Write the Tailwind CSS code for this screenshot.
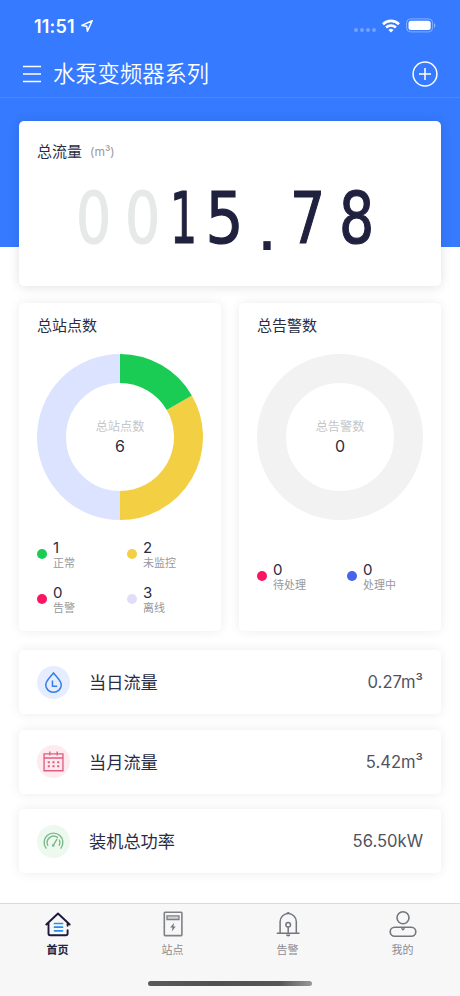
<!DOCTYPE html>
<html lang="zh-CN">
<head>
<meta charset="utf-8">
<meta name="viewport" content="width=device-width, initial-scale=1">
<title>水泵变频器系列</title>
<script src="https://cdn.jsdelivr.net/npm/@tailwindcss/browser@4"></script>
</head>
<body class="bg-white font-['Inter','Noto_Sans_CJK_SC',sans-serif] text-[#2a2c44]">
<div class="flex h-[996px] w-[460px] flex-col overflow-hidden">

  <header class="h-[247px] shrink-0 bg-[#357aff] text-white">
    <!-- status bar -->
    <div class="flex h-[50px] items-center pt-[2px] pr-[24px] pl-[34px]">
      <span class="w-[43px] text-[18px] font-semibold tracking-[0.2px] whitespace-nowrap">11:51</span>
      <svg class="ml-[3px] h-[14px] w-[14px]" viewBox="0 0 14 14" fill="none" stroke="white" stroke-width="1.5" stroke-linejoin="round"><path d="M12.2 1.8 1.8 6.4l4.9.8.7 5z"/></svg>
      <div class="mt-[8px] ml-auto flex gap-[2px]">
        <i class="h-[4px] w-[4px] rounded-full bg-white/30"></i><i class="h-[4px] w-[4px] rounded-full bg-white/30"></i><i class="h-[4px] w-[4px] rounded-full bg-white/30"></i><i class="h-[4px] w-[4px] rounded-full bg-white/30"></i>
      </div>
      <svg class="ml-[6px] h-[14px] w-[18px]" viewBox="0 0 18 14" fill="none" stroke="white" stroke-width="2.6"><path d="M1 5.2a11.4 11.4 0 0 1 16 0"/><path d="M4.1 8.5a7 7 0 0 1 9.8 0"/><path d="M9 13.6 6.5 11a3.6 3.6 0 0 1 5 0z" fill="white" stroke="none"/></svg>
      <svg class="-mt-[2px] ml-[6px] h-[15px] w-[30px]" viewBox="0 0 30 15" fill="none"><rect x=".6" y=".9" width="26" height="13" rx="4" stroke="white" stroke-opacity=".4"/><rect x="2.5" y="2.8" width="22.2" height="9.2" rx="2.5" fill="white"/><path d="M28 5.2c1.8.7 1.8 3.9 0 4.6z" fill="white" fill-opacity=".45"/></svg>
    </div>
    <!-- title bar -->
    <div class="flex h-[48px] items-center border-b border-white/10 pr-[22px] pl-[23px]">
      <svg class="h-[18px] w-[18px]" viewBox="0 0 18 18" stroke="white" stroke-width="1.5"><path d="M0 1.500h18M0 9h18M0 16.500h18"/></svg>
      <h1 class="ml-[12px] text-[22.3px] leading-[46px] font-[350]">水泵变频器系列</h1>
      <svg class="ml-auto h-[26px] w-[26px]" viewBox="0 0 26 26" fill="none" stroke="white" stroke-width="1.5"><circle cx="13" cy="13" r="11.9"/><path d="M13 7v12M7 13h12"/></svg>
    </div>
  </header>

  <main class="relative -mt-[126px] px-[19px]">
    <section class="h-[165px] rounded-[5px] bg-white px-[18px] pt-[20px] shadow-[0_1px_12px_rgba(0,0,0,0.12)]">
      <div class="flex h-[22px] items-center text-[15px]">总流量<span class="ml-[8px] text-[12px] text-[#9899a1]">(m³)</span></div>
      <div class="mt-[29px] ml-[33px] flex h-[53px] w-[314px] items-center text-center font-['DejaVu_Sans',sans-serif] text-[71px] leading-[53px] text-[#20213f] [-webkit-text-stroke:1.2px]">
        <span class="flex w-[48px] justify-center text-[#e7e9e9]"><b class="scale-x-[0.78] font-normal">0</b></span>
        <span class="flex w-[49px] justify-center text-[#e7e9e9]"><b class="scale-x-[0.78] font-normal">0</b></span>
        <span class="flex w-[34px] justify-center"><b class="scale-x-[0.6] font-normal">1</b></span>
        <span class="flex w-[48px] justify-center"><b class="scale-x-[0.84] font-normal">5</b></span>
        <span class="flex w-[36px] justify-center"><b class="translate-y-[7px] font-normal [-webkit-text-stroke:0]">.</b></span>
        <span class="flex w-[45px] justify-center"><b class="scale-x-[0.78] font-normal">7</b></span>
        <span class="flex w-[54px] justify-center"><b class="scale-x-[0.78] font-normal">8</b></span>
      </div>
    </section>

    <div class="mt-[17px] grid grid-cols-2 gap-[18px]">
      <section class="h-[328px] rounded-[5px] bg-white px-[18px] pt-[12px] shadow-[0_0_12px_rgba(0,0,0,0.08)]">
        <h2 class="h-[22px] text-[15px] leading-[22px]">总站点数</h2>
        <div class="mt-[17px] grid h-[166px] w-[166px] place-items-center">
          <svg class="col-start-1 row-start-1 h-[166px] w-[166px]" viewBox="0 0 166 166" fill="none" stroke-width="29"><path d="M83 151.5a68.5 68.5 0 0 1 0-137" stroke="#dce3ff"/><path d="M142.32 48.75A68.5 68.5 0 0 1 83 151.5" stroke="#f3cf44"/><path d="M83 14.5a68.5 68.5 0 0 1 59.32 34.25" stroke="#1acc54"/></svg>
          <div class="col-start-1 row-start-1 text-center"><div class="text-[12.2px] leading-[18px] text-[#c6c6c8]">总站点数</div><div class="text-[16px] leading-[21px]">6</div></div>
        </div>
        <div class="mt-[18px] grid grid-cols-[90px_80px] gap-y-[14px]">
          <div class="flex items-center"><i class="mr-[6px] h-[10px] w-[10px] rounded-full bg-[#1acc54]"></i><div class="pt-[1px]"><div class="h-[16px] text-[15px] leading-[18px]">1</div><div class="h-[14px] text-[11px] leading-[16px] text-[#97989c]">正常</div></div></div>
          <div class="flex items-center"><i class="mr-[6px] h-[10px] w-[10px] rounded-full bg-[#f3cf44]"></i><div class="pt-[1px]"><div class="h-[16px] text-[15px] leading-[18px]">2</div><div class="h-[14px] text-[11px] leading-[16px] text-[#97989c]">未监控</div></div></div>
          <div class="flex items-center"><i class="mr-[6px] h-[10px] w-[10px] rounded-full bg-[#fa1464]"></i><div class="pt-[1px]"><div class="h-[16px] text-[15px] leading-[18px]">0</div><div class="h-[14px] text-[11px] leading-[16px] text-[#97989c]">告警</div></div></div>
          <div class="flex items-center"><i class="mr-[6px] h-[10px] w-[10px] rounded-full bg-[#e0dff7]"></i><div class="pt-[1px]"><div class="h-[16px] text-[15px] leading-[18px]">3</div><div class="h-[14px] text-[11px] leading-[16px] text-[#97989c]">离线</div></div></div>
        </div>
      </section>

      <section class="h-[328px] rounded-[5px] bg-white px-[18px] pt-[12px] shadow-[0_0_12px_rgba(0,0,0,0.08)]">
        <h2 class="h-[22px] text-[15px] leading-[22px]">总告警数</h2>
        <div class="mt-[17px] grid h-[166px] w-[166px] place-items-center">
          <svg class="col-start-1 row-start-1 h-[166px] w-[166px]" viewBox="0 0 166 166" fill="none"><circle cx="83" cy="83" r="68.5" stroke="#f2f2f2" stroke-width="29"/></svg>
          <div class="col-start-1 row-start-1 text-center"><div class="text-[12.2px] leading-[18px] text-[#c6c6c8]">总告警数</div><div class="text-[16px] leading-[21px]">0</div></div>
        </div>
        <div class="mt-[40px] grid grid-cols-[90px_80px]">
          <div class="flex items-center"><i class="mr-[6px] h-[10px] w-[10px] rounded-full bg-[#fa1464]"></i><div class="pt-[1px]"><div class="h-[16px] text-[15px] leading-[18px]">0</div><div class="h-[14px] text-[11px] leading-[16px] text-[#97989c]">待处理</div></div></div>
          <div class="flex items-center"><i class="mr-[6px] h-[10px] w-[10px] rounded-full bg-[#4563ed]"></i><div class="pt-[1px]"><div class="h-[16px] text-[15px] leading-[18px]">0</div><div class="h-[14px] text-[11px] leading-[16px] text-[#97989c]">处理中</div></div></div>
        </div>
      </section>
    </div>

    <div class="mt-[19px] flex flex-col gap-[15.3px]">
      <section class="flex h-[64.3px] items-center rounded-[5px] bg-white px-[18px] shadow-[0_0_12px_rgba(0,0,0,0.08)]">
        <span class="grid h-[33px] w-[33px] place-items-center rounded-full bg-[#e5edff]"><svg class="h-[21px] w-[21px]" viewBox="0 0 20 20" fill="none" stroke="#337ce8" stroke-width="1.4" stroke-linejoin="round"><path d="M10 .8C8 4 2.6 8.200 2.600 12.400a7.400 6.900 0 0 0 14.800 0C17.400 8.200 12 4 10 .8Z"/><path d="M9 8v5.500h4.500"/></svg></span>
        <span class="ml-[19px] pt-[2px] text-[17.2px]">当日流量</span>
        <span class="ml-auto pt-[1px] text-[16.6px] text-[#50535f]">0.27m³</span>
      </section>
      <section class="flex h-[64.3px] items-center rounded-[5px] bg-white px-[18px] shadow-[0_0_12px_rgba(0,0,0,0.08)]">
        <span class="grid h-[33px] w-[33px] place-items-center rounded-full bg-[#ffebef]"><svg class="h-[21px] w-[21px]" viewBox="0 0 20 20" fill="none" stroke="#e05d82" stroke-width="1.300"><path d="M1 2.800h18v16H1zM1 6.700h18M6.500.5v3.800M13.500.5v3.800"/><path d="M4.500 10.700h2M9 10.700h2M13.500 10.700h2M4.500 14.500h2M9 14.500h2M13.500 14.500h2" stroke-width="1.900"/></svg></span>
        <span class="ml-[19px] pt-[2px] text-[17.2px]">当月流量</span>
        <span class="ml-auto pt-[1px] text-[16.6px] text-[#50535f]">5.42m³</span>
      </section>
      <section class="flex h-[64.3px] items-center rounded-[5px] bg-white px-[18px] shadow-[0_0_12px_rgba(0,0,0,0.08)]">
        <span class="grid h-[33px] w-[33px] place-items-center rounded-full bg-[#edf8ee]"><svg class="h-[21px] w-[21px]" viewBox="0 0 20 20" fill="none" stroke="#78b888" stroke-width="1.300" stroke-linecap="round"><path d="M2.900 16.300a8.900 8.900 0 1 1 14.200 0"/><path d="M4.500 13.600a6.200 6.200 0 0 1 9.300-7.500M15.700 8.700a6.200 6.200 0 0 1-.2 4.900"/><path d="m13.200 8-3.200 5.200"/><circle cx="9.700" cy="13.800" r=".6"/></svg></span>
        <span class="ml-[19px] pt-[2px] text-[17.2px]">装机总功率</span>
        <span class="ml-auto pt-[1px] text-[16.6px] text-[#50535f]">56.50kW</span>
      </section>
    </div>
  </main>

  <!-- tab bar -->
  <footer class="mt-auto h-[93px] shrink-0 border-t border-[#dadada] bg-[#f7f7f7] pt-[6px]">
    <nav class="grid grid-cols-4 text-[11px] leading-[18px] text-[#8a8b90]">
      <div class="flex flex-col items-center gap-[3px] font-bold text-[#222340]"><svg class="h-[28px] w-[28px]" viewBox="0 0 28 28" fill="none" stroke="#1c1a3c" stroke-width="1.900" stroke-linecap="round" stroke-linejoin="round"><path d="m2.300 14.500 11.700-11 11.700 11M4.500 13v10.500q0 1.700 1.700 1.700h15.600q1.800 0 1.800-1.800v-3.100M23.600 13v2.800"/><path d="M10.500 13.500h8M10.500 17.200h8M10.500 20.800h8" stroke="#258fed" stroke-width="1.700"/></svg><span>首页</span></div>
      <div class="flex flex-col items-center gap-[3px]"><svg class="h-[28px] w-[28px]" viewBox="0 0 28 28" fill="none" stroke="#7f8186" stroke-width="1.600"><rect x="5.300" y="2.300" width="17.600" height="23.300" rx=".8"/><path d="M8 5.800h12v3.700H8z" fill="#d2d3d5" stroke-width="1.300"/><path d="m15.200 12.800-4 4.800h2.400l-.9 4 4-5h-2.400z" fill="#6f7278" stroke="none"/></svg><span>站点</span></div>
      <div class="flex flex-col items-center gap-[3px]"><svg class="h-[28px] w-[28px]" viewBox="0 0 28 28" fill="none" stroke="#73767e" stroke-width="1.500"><path d="M2.800 23.200h22.700M6.100 23V11.500a8.100 7.900 0 0 1 16.200 0V23M14.200 17v6"/><circle cx="14.200" cy="14.800" r="2.300"/><path d="M12.300 3a1.900 1.500 0 0 1 3.800 0zM12 24h4.400a2.200 2 0 0 1-4.400 0" fill="#73767e" stroke="none" transform="translate(0 .4)"/></svg><span>告警</span></div>
      <div class="flex flex-col items-center gap-[3px]"><svg class="h-[28px] w-[28px]" viewBox="0 0 28 28" fill="none" stroke="#73767e" stroke-width="1.600"><circle cx="14" cy="7.700" r="6"/><rect x="1.200" y="17.200" width="25.600" height="9" rx="4.500"/><path d="M12.500 18.200 14 19.700l1.500-1.500" stroke-width="1.400"/></svg><span>我的</span></div>
    </nav>
    <div class="mx-auto mt-[22px] h-[5px] w-[164px] rounded-full bg-[linear-gradient(90deg,#5a5a5a,#505050_40%,#555_80%,#999)]"></div>
  </footer>
</div>
</body>
</html>
